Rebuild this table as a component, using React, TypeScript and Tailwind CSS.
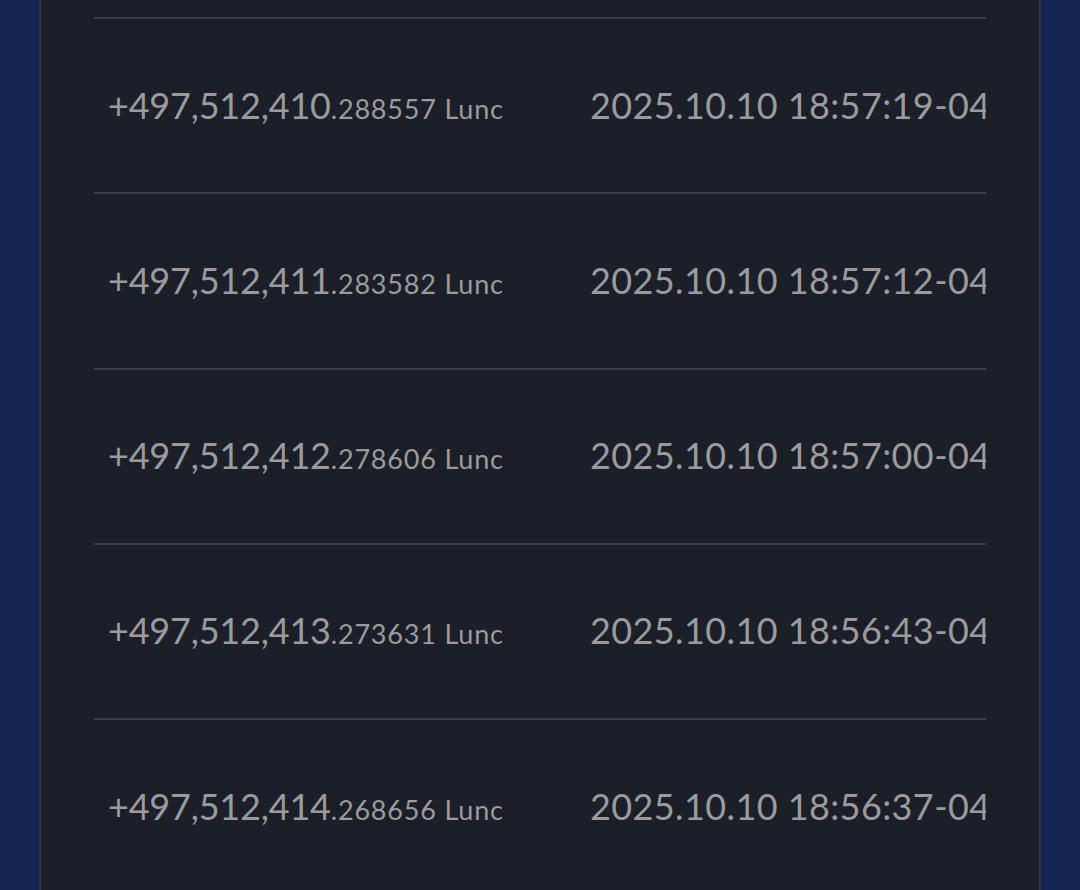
const rows = [
  { whole: "+497,512,410", frac: ".288557", time: "2025.10.10 18:57:19-04:00" },
  { whole: "+497,512,411", frac: ".283582", time: "2025.10.10 18:57:12-04:00" },
  { whole: "+497,512,412", frac: ".278606", time: "2025.10.10 18:57:00-04:00" },
  { whole: "+497,512,413", frac: ".273631", time: "2025.10.10 18:56:43-04:00" },
  { whole: "+497,512,414", frac: ".268656", time: "2025.10.10 18:56:37-04:00" },
]

const App = () => (
  <div className="h-[890px] w-[1080px] overflow-hidden bg-[#142651]" style={{ fontFamily: "Lato, 'Noto Sans', sans-serif" }}>
    <div className="ml-[39px] h-full w-[1002px] border-x-2 border-[#31343b] bg-[#1c1f28] px-[53px] pt-[17px]">
      {rows.map((r) => (
        <div key={r.whole} className="flex h-[175.25px] items-center border-t-2 border-[#393c42] pb-[2px] text-[#9b9b9b]">
          <div className="w-[496px] shrink-0 pl-[14px] whitespace-nowrap">
            <span className="text-[36px] tracking-[-0.2px]">{r.whole}</span>
            <span className="text-[27px] tracking-[0.8px]">{r.frac} Lunc</span>
          </div>
          <div className="min-w-0 flex-1 overflow-hidden whitespace-nowrap text-[36px] tracking-[0.4px]">{r.time}</div>
        </div>
      ))}
    </div>
  </div>
)

export default App
